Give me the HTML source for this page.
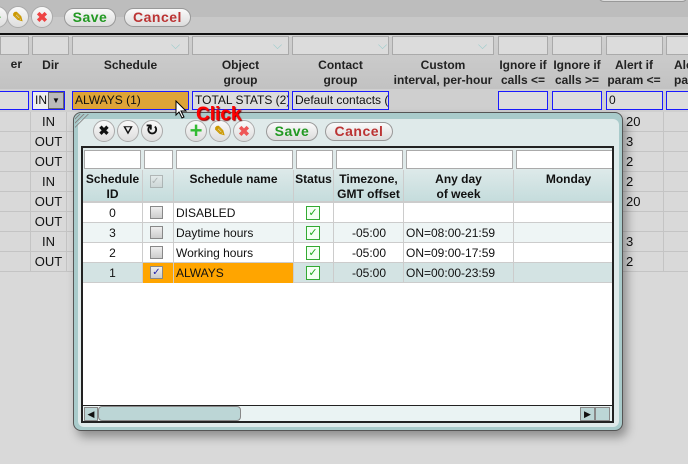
<!DOCTYPE html>
<html><head><meta charset="utf-8"><style>
*{box-sizing:border-box;margin:0;padding:0}
body{width:688px;height:464px;overflow:hidden;background:#d9d9d9;font-family:"Liberation Sans",Arial,sans-serif;font-size:12px;color:#111;position:relative}
.a{position:absolute}
.btn{position:absolute;border:1px solid #999;border-radius:10px;background:linear-gradient(#fafafa,#dcdcdc);font-weight:bold;font-size:14px;text-align:center;line-height:17px;letter-spacing:.5px}
.circ{position:absolute;width:22px;height:22px;border-radius:50%;border:1px solid #aaa;background:linear-gradient(#fafafa,#ddd);text-align:center;font-weight:bold;line-height:20px;font-size:14px}
.fi{position:absolute;height:19px;background:#dcdcdc;border:1px solid #aaa}
.hd{position:absolute;top:56px;height:32px;font-weight:bold;text-align:center;line-height:15px;padding-top:2px;color:#222}
.ed{position:absolute;top:91px;height:19px;border:1px solid #1a1aff;background:#ddd;font-size:12px;line-height:17px;padding-left:2px;overflow:hidden;white-space:nowrap}
.row{position:absolute;left:0;width:688px;height:20px;border-bottom:1px solid #c4c4c4}
.dc{position:absolute;width:37px;text-align:center;line-height:20px;font-size:13px;border-left:1px solid #c4c4c4;border-right:1px solid #c4c4c4;height:20px}
.dlg{position:absolute;left:73px;top:112px;width:550px;height:319px;border-radius:8px;background:#a9cbcb;border:1px solid #555;box-shadow:4px 6px 10px rgba(0,0,0,.35)}
.inner{position:absolute;left:4px;top:6px;width:541px;height:308px;background:#dfeaea;border-radius:6px}
.tbl{position:absolute;left:81px;top:146px;width:533px;height:277px;background:#fff;border:2px solid #222;overflow:hidden}
.c{position:absolute;font-size:12px}
.dh{position:absolute;top:22px;height:32px;font-weight:bold;text-align:center;line-height:15px;padding-top:2px;background:linear-gradient(#dde9e9,#c4dcdc);border-right:1px solid #ccc}
.df{position:absolute;top:2px;height:19px;background:#fff;border:1px solid #aaa}
.dr{position:absolute;left:0;width:529px;height:20px;border-bottom:1px solid #ccc}
.cb{position:absolute;width:13px;height:13px;border:1px solid #888;background:linear-gradient(#eee,#ccc)}
.st{position:absolute;width:14px;height:14px;border:1px solid #3a3;background:#f4fff4;color:#2a2;font-size:11px;line-height:12px;text-align:center}
</style></head><body>
<div class="a" style="left:0;top:0;width:688px;height:17px;background:#bdbdbd"></div>
<div class="a" style="left:0;top:17px;width:688px;height:16px;background:#c8c8c8"></div>
<div class="a" style="left:0;top:33px;width:688px;height:2px;background:#111"></div>
<div class="circ" style="left:-14px;top:6px;color:#3a3">+</div>
<div class="circ" style="left:7px;top:6px;color:#c90">✎</div>
<div class="circ" style="left:31px;top:6px;color:#e44">✖</div>
<div class="btn" style="left:64px;top:8px;width:52px;height:19px;color:#229922">Save</div>
<div class="btn" style="left:124px;top:8px;width:67px;height:19px;color:#b33">Cancel</div>
<div class="btn" style="left:598px;top:-10px;width:90px;height:12px"></div>
<div class="a" style="left:0;top:35px;width:688px;height:54px;background:linear-gradient(#d0d0d0,#c2c2c2)"></div>
<div class="fi" style="left:0;top:36px;width:29px"></div>
<div class="fi" style="left:32px;top:36px;width:37px"></div>
<div class="fi" style="left:72px;top:36px;width:117px"></div>
<div class="fi" style="left:192px;top:36px;width:97px"></div>
<div class="fi" style="left:292px;top:36px;width:97px"></div>
<div class="fi" style="left:392px;top:36px;width:102px"></div>
<div class="fi" style="left:498px;top:36px;width:50px"></div>
<div class="fi" style="left:552px;top:36px;width:50px"></div>
<div class="fi" style="left:606px;top:36px;width:57px"></div>
<div class="fi" style="left:666px;top:36px;width:30px"></div>
<div class="a" style="left:171px;top:38px;color:#9cc;font-size:12px">⌵</div>
<div class="a" style="left:273px;top:38px;color:#9cc">⌵</div>
<div class="a" style="left:378px;top:38px;color:#9cc">⌵</div>
<div class="a" style="left:478px;top:38px;color:#9cc">⌵</div>
<div class="hd" style="left:0;width:22px;text-align:right;padding-top:1px">er</div>
<div class="hd" style="left:32px;width:37px">Dir</div>
<div class="hd" style="left:72px;width:117px">Schedule</div>
<div class="hd" style="left:192px;width:97px">Object<br>group</div>
<div class="hd" style="left:292px;width:97px">Contact<br>group</div>
<div class="hd" style="left:390px;width:106px">Custom<br>interval, per-hour</div>
<div class="hd" style="left:496px;width:54px">Ignore if<br>calls &lt;=</div>
<div class="hd" style="left:550px;width:54px">Ignore if<br>calls &gt;=</div>
<div class="hd" style="left:604px;width:60px">Alert if<br>param &lt;=</div>
<div class="hd" style="left:664px;width:30px;text-align:left;padding-left:10px">Ale<br>para</div>
<div class="a" style="left:0;top:89px;width:688px;height:23px;background:#cfcfcf"></div>
<div class="ed" style="left:-2px;width:31px"></div>
<div class="ed" style="left:32px;width:33px;background:#eee">IN</div>
<div class="a" style="left:48px;top:92px;width:16px;height:17px;background:#bbb;border:1px solid #666;text-align:center;font-size:8px;line-height:15px">▼</div>
<div class="ed" style="left:72px;width:117px;background:#dea437">ALWAYS (1)</div>
<div class="ed" style="left:192px;width:97px">TOTAL STATS (2)</div>
<div class="ed" style="left:292px;width:97px">Default contacts (</div>
<div class="ed" style="left:498px;width:50px"></div>
<div class="ed" style="left:552px;width:50px"></div>
<div class="ed" style="left:606px;width:57px">0</div>
<div class="ed" style="left:666px;width:30px"></div>
<div class="row" style="top:112px"></div><div class="row" style="top:132px"></div><div class="row" style="top:152px"></div><div class="row" style="top:172px"></div><div class="row" style="top:192px"></div><div class="row" style="top:212px"></div><div class="row" style="top:232px"></div><div class="row" style="top:252px"></div>
<div class="dc" style="left:30px;top:112px">IN</div><div class="dc" style="left:30px;top:132px">OUT</div><div class="dc" style="left:30px;top:152px">OUT</div><div class="dc" style="left:30px;top:172px">IN</div><div class="dc" style="left:30px;top:192px">OUT</div><div class="dc" style="left:30px;top:212px">OUT</div><div class="dc" style="left:30px;top:232px">IN</div><div class="dc" style="left:30px;top:252px">OUT</div>
<div class="a" style="left:663px;top:112px;width:1px;height:160px;background:#c4c4c4"></div>
<div class="a" style="left:626px;top:112px;font-size:13px;line-height:20px">20<br>3<br>2<br>2<br>20<br>&nbsp;<br>3<br>2</div>
<div class="dlg"><div class="inner"></div></div>
<div class="a" style="left:75px;top:114px;width:14px;height:14px;background:repeating-linear-gradient(135deg,#888 0 1px,transparent 1px 3px);clip-path:polygon(0 0,100% 0,0 100%)"></div>
<div class="circ" style="left:93px;top:120px;font-size:13px">✖</div>
<div class="circ" style="left:117px;top:120px;font-size:11px">⛛</div>
<div class="circ" style="left:141px;top:120px;font-size:15px">↻</div>
<div class="circ" style="left:185px;top:120px;color:#3b3;font-size:22px">+</div>
<div class="circ" style="left:209px;top:120px;color:#c90">✎</div>
<div class="circ" style="left:233px;top:120px;color:#e55">✖</div>
<div class="btn" style="left:266px;top:122px;width:52px;height:19px;color:#229922">Save</div>
<div class="btn" style="left:325px;top:122px;width:68px;height:19px;color:#b33">Cancel</div>
<div class="a" style="left:196px;top:104px;color:#f00;font-weight:bold;font-size:19px;text-shadow:1px 1px 1px #800">Click</div>
<svg class="a" style="left:175px;top:100px" width="14" height="20"><path d="M1 1 L1 15 L4 12 L7 18 L9 17 L6 11 L11 11 Z" fill="#fff" stroke="#000"/></svg>
<div class="tbl">
 <div class="a" style="left:0;top:0;width:529px;height:22px;background:#dfeaea"></div>
 <div class="df" style="left:1px;width:57px"></div>
 <div class="df" style="left:61px;width:29px"></div>
 <div class="df" style="left:93px;width:117px"></div>
 <div class="df" style="left:213px;width:37px"></div>
 <div class="df" style="left:253px;width:67px"></div>
 <div class="df" style="left:323px;width:107px"></div>
 <div class="df" style="left:433px;width:100px"></div>
 <div class="dh" style="left:0;width:60px">Schedule<br>ID</div>
 <div class="dh" style="left:60px;width:31px"></div>
 <div class="cb" style="left:67px;top:27px;opacity:.5;font-size:10px;line-height:11px;color:#888">✓</div>
 <div class="dh" style="left:91px;width:120px;padding-top:2px">Schedule name</div>
 <div class="dh" style="left:211px;width:40px">Status</div>
 <div class="dh" style="left:251px;width:70px">Timezone,<br>GMT offset</div>
 <div class="dh" style="left:321px;width:110px">Any day<br>of week</div>
 <div class="dh" style="left:431px;width:110px">Monday</div>
 <div class="a" style="left:0;top:53px;width:529px;height:2px;background:#ccc"></div>
 <div class="dr" style="top:55px;background:#fff"></div>
 <div class="dr" style="top:75px;background:#eef5f5"></div>
 <div class="dr" style="top:95px;background:#fff"></div>
 <div class="dr" style="top:115px;background:#d3e3e3"></div>
 <div class="a" style="left:60px;top:115px;width:151px;height:20px;background:#ffa500"></div>
 <div class="a" style="left:59px;top:55px;width:1px;height:80px;background:#ccc"></div>
 <div class="a" style="left:90px;top:55px;width:1px;height:80px;background:#ccc"></div>
 <div class="a" style="left:210px;top:55px;width:1px;height:80px;background:#ccc"></div>
 <div class="a" style="left:250px;top:55px;width:1px;height:80px;background:#ccc"></div>
 <div class="a" style="left:320px;top:55px;width:1px;height:80px;background:#ccc"></div>
 <div class="a" style="left:430px;top:55px;width:1px;height:80px;background:#ccc"></div>
 <div class="c" style="left:0;top:55px;width:59px;text-align:center;line-height:20px">0<br>3<br>2<br>1</div>
 <div class="cb" style="left:67px;top:58px"></div><div class="cb" style="left:67px;top:78px"></div><div class="cb" style="left:67px;top:98px"></div>
 <div class="cb" style="left:67px;top:118px;color:#22a;font-size:10px;line-height:11px;text-align:center">✓</div>
 <div class="c" style="left:93px;top:55px;line-height:20px">DISABLED<br>Daytime hours<br>Working hours<br>ALWAYS</div>
 <div class="st" style="left:223px;top:58px">✓</div><div class="st" style="left:223px;top:78px">✓</div><div class="st" style="left:223px;top:98px">✓</div><div class="st" style="left:223px;top:118px">✓</div>
 <div class="c" style="left:251px;width:70px;top:75px;text-align:center;line-height:20px">-05:00<br>-05:00<br>-05:00</div>
 <div class="c" style="left:323px;top:75px;line-height:20px">ON=08:00-21:59<br>ON=09:00-17:59<br>ON=00:00-23:59</div>
 <div class="a" style="left:0;top:257px;width:529px;height:16px;background:#eaf3f3;border-top:1px solid #222"></div>
 <div class="a" style="left:1px;top:259px;width:14px;height:14px;background:#bcd6d6;border:1px solid #888;font-size:9px;line-height:12px;text-align:center">◀</div>
 <div class="a" style="left:15px;top:258px;width:143px;height:15px;background:#bcd6d6;border:1px solid #888;border-radius:4px"></div>
 <div class="a" style="left:497px;top:259px;width:15px;height:14px;background:#bcd6d6;border:1px solid #888;font-size:9px;line-height:12px;text-align:center">▶</div>
 <div class="a" style="left:512px;top:259px;width:15px;height:14px;background:#bcd6d6;border:1px solid #888"></div>
</div>
</body></html>
